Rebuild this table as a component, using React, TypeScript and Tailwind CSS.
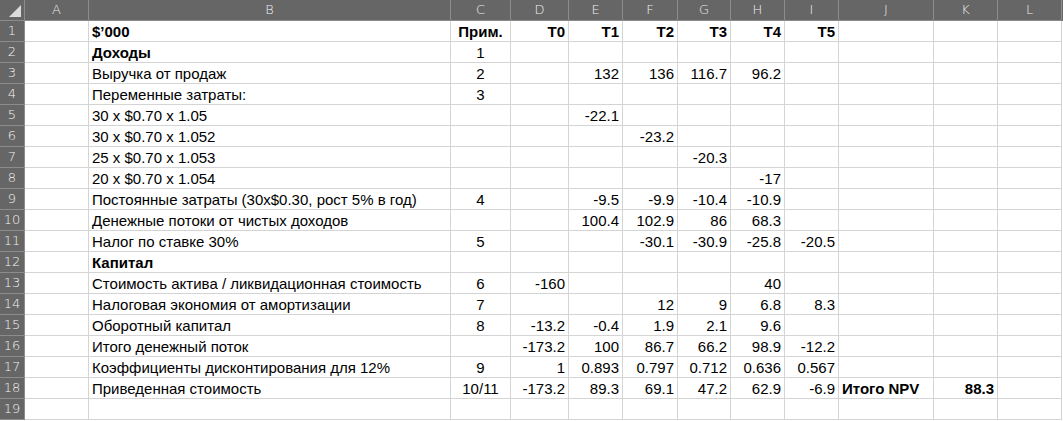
import React from 'react';

type Cell = string | { v: string; b?: boolean };

const cols = ['A', 'B', 'C', 'D', 'E', 'F', 'G', 'H', 'I', 'J', 'K', 'L'];

// index: 0=A .. 11=L ; alignment per column
const align: Record<number, string> = {
  0: 'justify-start',
  1: 'justify-start',
  2: 'justify-center',
  9: 'justify-start',
};

const bold = (v: string) => ({ v, b: true });

const rows: Cell[][] = [
  ['', bold('$’000'), bold('Прим.'), bold('T0'), bold('T1'), bold('T2'), bold('T3'), bold('T4'), bold('T5'), '', '', ''],
  ['', bold('Доходы'), '1', '', '', '', '', '', '', '', '', ''],
  ['', 'Выручка от продаж', '2', '', '132', '136', '116.7', '96.2', '', '', '', ''],
  ['', 'Переменные затраты:', '3', '', '', '', '', '', '', '', '', ''],
  ['', '30 x $0.70 x 1.05', '', '', '-22.1', '', '', '', '', '', '', ''],
  ['', '30 x $0.70 x 1.052', '', '', '', '-23.2', '', '', '', '', '', ''],
  ['', '25 x $0.70 x 1.053', '', '', '', '', '-20.3', '', '', '', '', ''],
  ['', '20 x $0.70 x 1.054', '', '', '', '', '', '-17', '', '', '', ''],
  ['', 'Постоянные затраты (30x$0.30, рост 5% в год)', '4', '', '-9.5', '-9.9', '-10.4', '-10.9', '', '', '', ''],
  ['', 'Денежные потоки от чистых доходов', '', '', '100.4', '102.9', '86', '68.3', '', '', '', ''],
  ['', 'Налог по ставке 30%', '5', '', '', '-30.1', '-30.9', '-25.8', '-20.5', '', '', ''],
  ['', bold('Капитал'), '', '', '', '', '', '', '', '', '', ''],
  ['', 'Стоимость актива / ликвидационная стоимость', '6', '-160', '', '', '', '40', '', '', '', ''],
  ['', 'Налоговая экономия от амортизации', '7', '', '', '12', '9', '6.8', '8.3', '', '', ''],
  ['', 'Оборотный капитал', '8', '-13.2', '-0.4', '1.9', '2.1', '9.6', '', '', '', ''],
  ['', 'Итого денежный поток', '', '-173.2', '100', '86.7', '66.2', '98.9', '-12.2', '', '', ''],
  ['', 'Коэффициенты дисконтирования для 12%', '9', '1', '0.893', '0.797', '0.712', '0.636', '0.567', '', '', ''],
  ['', 'Приведенная стоимость', '10/11', '-173.2', '89.3', '69.1', '47.2', '62.9', '-6.9', bold('Итого NPV'), bold('88.3'), ''],
  ['', '', '', '', '', '', '', '', '', '', '', ''],
];

const grid =
  'grid grid-cols-[25px_64px_362px_60px_58px_54px_55px_53px_54px_54px_95px_64px_64px]';

export default function App() {
  return (
    <div className="w-[1063px] h-[421px] overflow-hidden bg-white font-['Liberation_Sans',Arial,sans-serif] text-[15px] text-black">
      <div className={`${grid} h-[21px] bg-[#666666]`}>
        <div className="relative border-r border-b border-[#8c8c8c]">
          <div className="absolute left-[9px] top-[5px] w-0 h-0 border-l-[12px] border-l-transparent border-b-[12px] border-b-[#dcdcdc]" />
        </div>
        {cols.map((c) => (
          <div
            key={c}
            className="flex items-center justify-center border-r border-b border-[#8c8c8c] text-[13px] text-[#eeeeee] font-['DejaVu_Sans',sans-serif] font-light"
          >
            {c}
          </div>
        ))}
      </div>
      {rows.map((r, i) => (
        <div key={i} className={`${grid} h-[21px]`}>
          <div className="flex items-center justify-center bg-[#666666] border-r border-b border-[#8c8c8c] text-[13px] text-[#f2f2f2] font-['DejaVu_Sans',sans-serif] font-light">
            {i + 1}
          </div>
          {r.map((cell, j) => {
            const v = typeof cell === 'string' ? cell : cell.v;
            const b = typeof cell !== 'string' && cell.b;
            return (
              <div
                key={j}
                className={`flex items-end pb-[1px] px-[3px] whitespace-nowrap border-r border-b border-[#d4d4d4] leading-[17px] ${
                  align[j] ?? 'justify-end'
                } ${b ? 'font-bold' : ''}`}
              >
                {v}
              </div>
            );
          })}
        </div>
      ))}
    </div>
  );
}
